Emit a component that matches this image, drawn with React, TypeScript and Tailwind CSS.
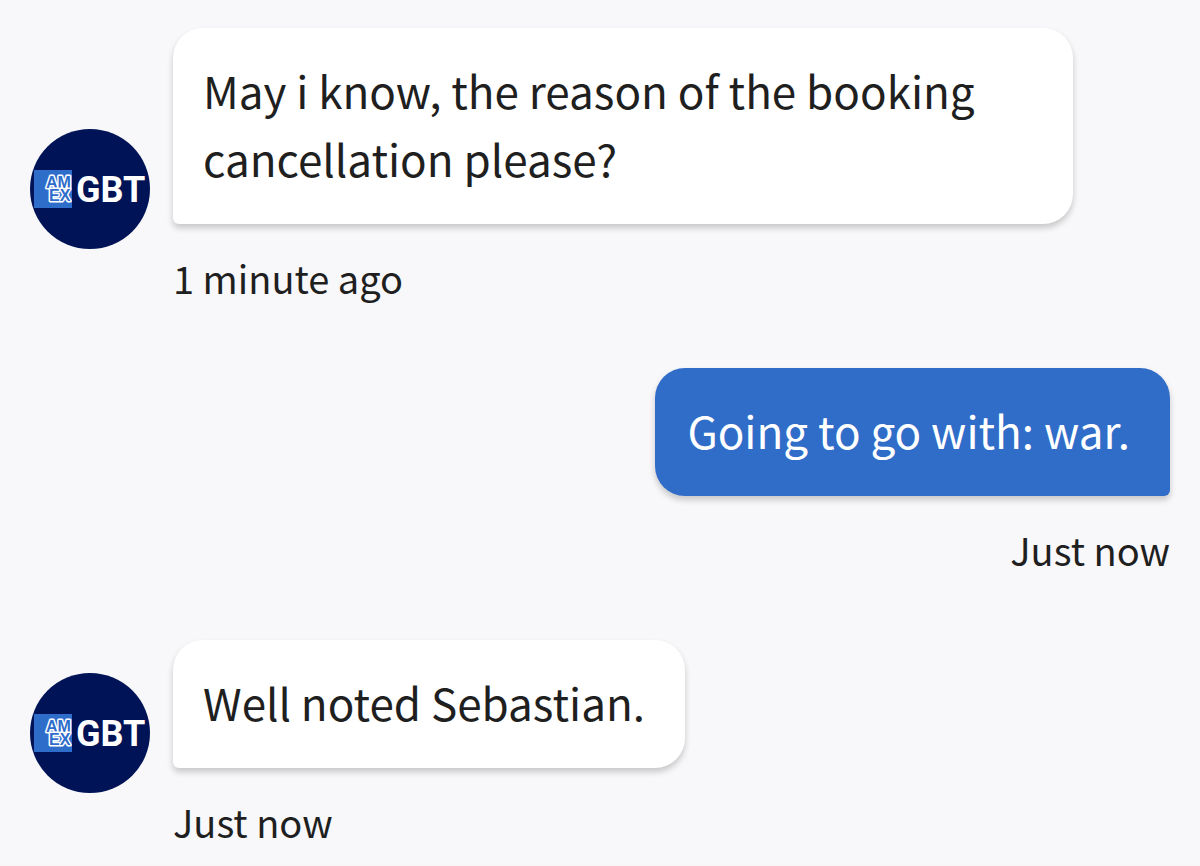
type Message = {
  id: number;
  text: string;
  time: string;
  from: "agent" | "user";
};

const messages: Message[] = [
  { id: 1, from: "agent", text: "May i know, the reason of the booking cancellation please?", time: "1 minute ago" },
  { id: 2, from: "user", text: "Going to go with: war.", time: "Just now" },
  { id: 3, from: "agent", text: "Well noted Sebastian.", time: "Just now" },
];

const Avatar = () => (
  <svg
    viewBox="0 0 120 120"
    role="img"
    aria-label="Amex GBT"
    className="mb-[57px] size-30 shrink-0 font-bold"
  >
    <circle cx="60" cy="60" r="60" fill="#001356" />
    <svg x="4" y="41" width="38" height="38" viewBox="0 0 38 38">
      <rect width="38" height="38" fill="#2f6dcb" />
      <g
        className="font-['Liberation_Sans',sans-serif]"
        fill="#2f6dcb"
        stroke="#fff"
        strokeWidth="3"
        strokeLinejoin="round"
        paintOrder="stroke"
        fontSize="16"
      >
        <text x="12" y="18">AM</text>
        <text x="15" y="31">EX</text>
      </g>
    </svg>
    <text x="46" y="73" fontSize="36" fill="#fff" className="font-['Roboto',sans-serif]">GBT</text>
  </svg>
);

const ChatMessage = ({ message }: { message: Message }) => {
  const isUser = message.from === "user";

  return (
    <li className={isUser ? "flex justify-end" : "flex items-end gap-[23px]"}>
      {!isUser && <Avatar />}
      <div className={isUser ? "flex min-w-0 flex-col items-end" : "flex min-w-0 flex-col items-start"}>
        <p
          className={
            isUser
              ? "max-w-[900px] rounded-[30px] rounded-br-[6px] bg-[#2f6dc9] pt-7 pr-10 pb-8 pl-8 text-[44px] leading-[68px] text-white shadow-[0_4px_6px_rgba(0,0,0,0.2)]"
              : "max-w-[900px] rounded-[30px] rounded-bl-[6px] bg-white pt-7 pr-10 pb-8 pl-[30px] text-[44px] leading-[68px] shadow-[0_4px_6px_rgba(0,0,0,0.2)]"
          }
        >
          {message.text}
        </p>
        <time className="mt-[26px] text-[38px] leading-[56px]">{message.time}</time>
      </div>
    </li>
  );
};

const App = () => {
  return (
    <main className="min-h-screen bg-[#f8f8fa] px-[30px] pt-7 font-['Noto_Sans_CJK_SC',sans-serif] text-[#1f1f1f]">
      <ul className="flex flex-col gap-[62px]">
        {messages.map((message) => (
          <ChatMessage key={message.id} message={message} />
        ))}
      </ul>
    </main>
  );
};

export default App;
